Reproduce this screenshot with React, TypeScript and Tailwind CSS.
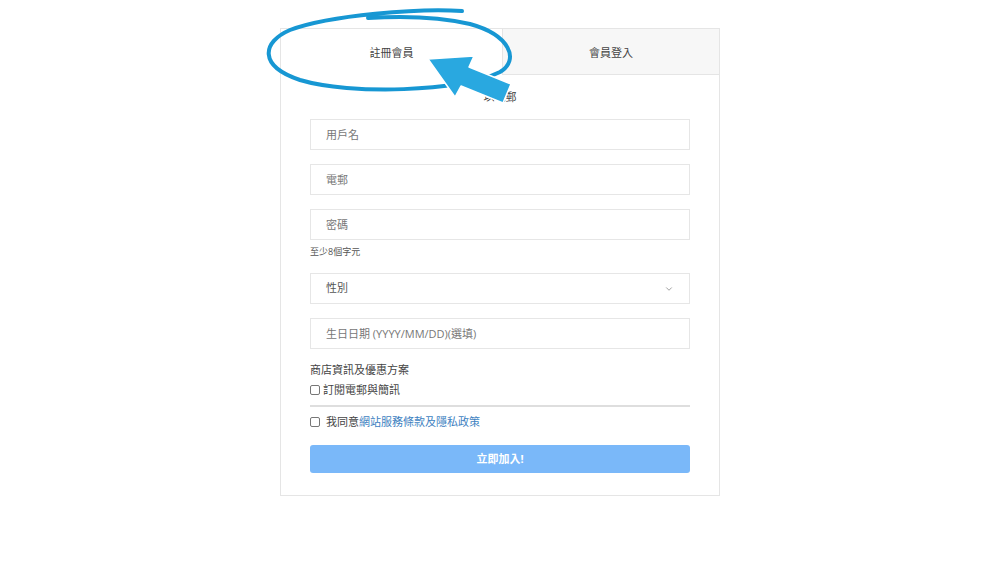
import { ChevronDown } from "lucide-react";

const font = "font-['Open_Sans','Noto_Sans_CJK_TC',sans-serif]";

function Field({ placeholder }: { placeholder: string }) {
  return (
    <input
      type="text"
      placeholder={placeholder}
      className="block w-full h-[31px] border border-[#e6e6e6] bg-white px-[15px] text-[11px] text-[#333] placeholder:text-[#777] outline-none"
    />
  );
}

function Annotation() {
  return (
    <svg
      className="absolute inset-0 pointer-events-none"
      width="1000"
      height="562"
      viewBox="0 0 1000 562"
    >
      <path
        d="M462,11 C420,8 330,15 290,30 C262,42 258,66 300,80 C350,95 460,92 500,72 C520,60 510,35 470,24 C440,17 400,16 368,18"
        fill="none"
        stroke="#1797d3"
        strokeWidth="4"
        strokeLinecap="round"
      />
      <polygon
        points="428,59 474,56 469,67 511,84 503,103 461,86 455,97"
        fill="#29a8e0"
        stroke="#ffffff"
        strokeWidth="1.5"
        strokeLinejoin="round"
      />
    </svg>
  );
}

export default function App() {
  return (
    <div className={`relative w-[1000px] h-[562px] bg-white overflow-hidden ${font}`}>
      <div className="pt-[28px] flex justify-center">
        <div className="w-[440px] border border-[#e5e5e5] bg-white">
          <div className="flex h-[46px]">
            <div className="w-[221px] flex items-center justify-center pt-[3px] text-[11px] text-[#444]">註冊會員</div>
            <div className="flex-1 flex items-center justify-center pt-[3px] bg-[#f7f7f7] border-l border-b border-[#e5e5e5] text-[11px] text-[#444]">
              會員登入
            </div>
          </div>

          <div className="px-[29px] pb-[22px]">
            <div className="h-[44px] flex items-center justify-center text-[11px] text-[#444]">以電郵</div>

            <div className="flex flex-col gap-[14px]">
              <Field placeholder="用戶名" />
              <Field placeholder="電郵" />
              <div>
                <Field placeholder="密碼" />
                <div className="text-[9px] text-[#555] mt-[6px] leading-[12px]">至少8個字元</div>
              </div>
            </div>

            <div className="mt-[15px] flex items-center justify-between h-[31px] border border-[#e6e6e6] px-[15px] text-[11px] text-[#555]">
              <span>性別</span>
              <ChevronDown size={10} strokeWidth={1.5} className="text-[#666]" />
            </div>

            <div className="mt-[14px]">
              <Field placeholder="生日日期 (YYYY/MM/DD)(選填)" />
            </div>

            <div className="mt-[13px] text-[11px] text-[#444] leading-[16px]">商店資訊及優惠方案</div>
            <label className="mt-[4px] flex items-center gap-[3px] text-[11px] text-[#444] leading-[16px]">
              <span className="w-[10px] h-[10px] border border-[#777] rounded-[2px] bg-white" />
              訂閱電郵與簡訊
            </label>

            <div className="mt-[7px] h-[2px] bg-[#dedede]" />

            <label className="mt-[7px] flex items-center gap-[6px] text-[11px] text-[#444] leading-[16px]">
              <span className="w-[10px] h-[10px] border border-[#777] rounded-[2px] bg-white" />
              <span>
                我同意<a className="text-[#3d7fc1]">網站服務條款及隱私政策</a>
              </span>
            </label>

            <button className="mt-[15px] w-full h-[28px] rounded-[3px] bg-[#7ab8f9] text-white text-[11px] font-bold">
              立即加入!
            </button>
          </div>
        </div>
      </div>
      <Annotation />
    </div>
  );
}
